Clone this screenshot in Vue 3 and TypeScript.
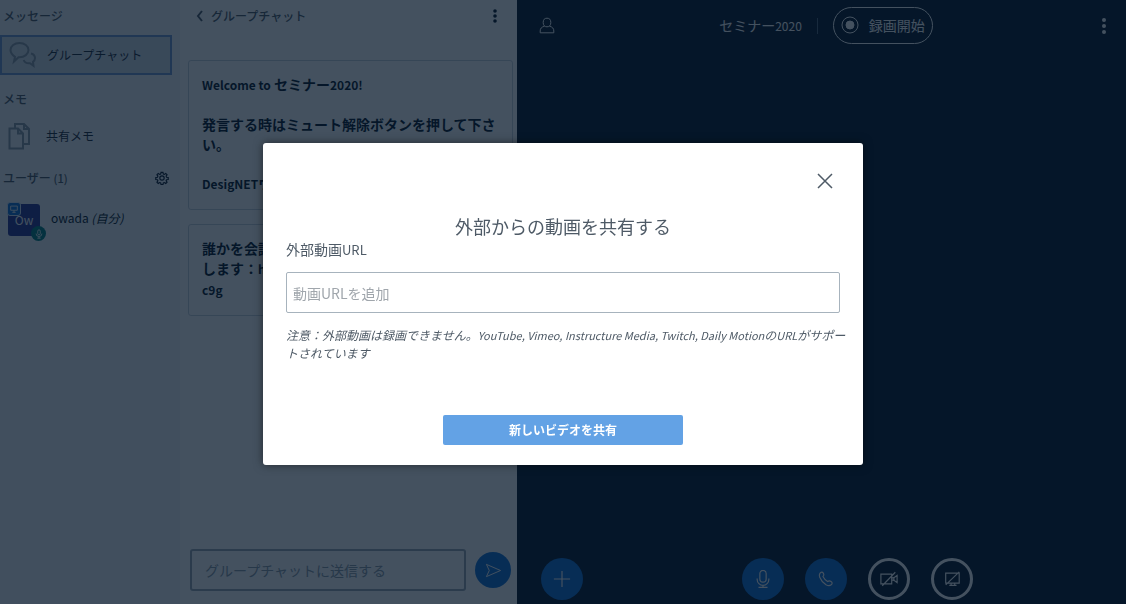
<script setup lang="ts">
import { ref } from 'vue'

const videoUrl = ref('')
const message = ref('')
const open = ref(true)
</script>

<template>
  <div class="app">
    <nav class="sidebar">
      <h2>メッセージ</h2>
      <button class="item active" type="button">
        <svg class="icon-lg" viewBox="0 0 28 28" aria-hidden="true">
          <path d="M5 20.500 6 15.800C3 13.800 1.500 11.400 1.500 9 1.500 5 5.500 2 10.500 2s9 3 9 7-4 7.200-9 7.200h-1z" />
          <path d="M22 12.500c2.700.8 4 2.600 4 4.600 0 1.600-.8 2.900-2 3.800l.5 4-3.500-2.600c-3.500.3-5.500-1-6.300-3.300" />
        </svg>
        <span>グループチャット</span>
      </button>
      <h2>メモ</h2>
      <button class="item" type="button">
        <svg class="icon-lg" viewBox="0 0 28 28" aria-hidden="true">
          <path d="M1.500 6.500h8.500l5 5V26.500H1.500zM10 6.500v5h5" />
          <path d="M7 6.500V2h9l5 5v15h-6M16 2v5h5" />
        </svg>
        <span>共有メモ</span>
      </button>
      <div class="users-head">
        <h2>ユーザー <span class="latin">(1)</span></h2>
        <button class="plain" type="button" aria-label="ユーザー管理">
          <svg class="gear" viewBox="0 0 16 16">
            <circle cx="8" cy="8" r="2.500" />
            <path d="M6.900 1.500h2.200l.4 1.900 1.200.5 1.600-1.100 1.500 1.500-1.100 1.600.5 1.200 1.900.4v2.200l-1.900.3-.5 1.200 1.100 1.600-1.500 1.500-1.600-1.100-1.200.5-.4 1.900H6.900l-.4-1.900-1.200-.5-1.600 1.100-1.500-1.500 1.100-1.600-.5-1.200-1.900-.3V7.500l1.900-.4.5-1.200-1.100-1.600 1.500-1.500 1.600 1.100 1.200-.5z" />
          </svg>
        </button>
      </div>
      <div class="user">
        <div class="avatar">
          <span>Ow</span>
          <span class="badge presenter">
            <svg viewBox="0 0 12 12"><path d="M2 2.500h8v5H2zM4 10h4M6 7.500V10" /></svg>
          </span>
          <span class="badge voice">
            <svg viewBox="0 0 12 12"><path d="M4.500 2.500a1.500 1.500 0 0 1 3 0v3a1.500 1.500 0 0 1-3 0zM2.500 5.500a3.500 3.500 0 0 0 7 0M6 9v2M4 11h4" /></svg>
          </span>
        </div>
        <span class="name">owada <em>(自分)</em></span>
      </div>
    </nav>

    <section class="chat">
      <header class="chat-head">
        <button class="plain back" type="button">
          <svg viewBox="0 0 8 12"><path d="M6 1 2 6l4 5" /></svg>
          <span>グループチャット</span>
        </button>
        <button class="plain" type="button" aria-label="オプション">
          <svg class="kebab" viewBox="0 0 6 16"><circle cx="3" cy="3" r="1.800" /><circle cx="3" cy="8" r="1.800" /><circle cx="3" cy="13" r="1.800" /></svg>
        </button>
      </header>
      <div class="messages">
        <article class="message">
          <p><span class="latin">Welcome to</span> セミナー<span class="latin">2020!</span></p>
          <p>発言する時はミュート解除ボタンを押して下さい。</p>
          <p><span class="latin">DesigNET</span>ウェブ会議</p>
        </article>
        <article class="message">
          <p>誰かを会議に招待する場合はこのリンクを送信<br />します：<span class="latin">https://meeting/owa-<br />c9g</span></p>
        </article>
      </div>
      <form class="composer" @submit.prevent>
        <input v-model="message" type="text" aria-label="メッセージ" placeholder="グループチャットに送信する" />
        <button class="send" type="submit" aria-label="送信">
          <svg viewBox="0 0 18 18"><path d="M1.500 2.500 16.500 9l-15 6.500L4.500 9z" /></svg>
        </button>
      </form>
    </section>

    <main class="media">
      <header class="nav">
        <button class="plain" type="button" aria-label="ユーザーリスト">
          <svg class="person" viewBox="0 0 16 18"><ellipse cx="8" cy="5.500" rx="3.800" ry="4.300" /><path d="M5.500 9.200C2.500 10 1.200 11.500 1.200 14v1.800h13.600V14c0-2.500-1.300-4-4.300-4.800" /></svg>
        </button>
        <div class="session">
          <h1>セミナー<span class="latin">2020</span></h1>
          <span class="divider"></span>
          <button class="record" type="button">
            <svg viewBox="0 0 18 18"><circle cx="9" cy="9" r="8" /><circle class="dot" cx="9" cy="9" r="4" /></svg>
            <span>録画開始</span>
          </button>
        </div>
        <button class="plain" type="button" aria-label="メニュー">
          <svg class="kebab" viewBox="0 0 6 16"><circle cx="3" cy="2" r="2" /><circle cx="3" cy="8" r="2" /><circle cx="3" cy="14" r="2" /></svg>
        </button>
      </header>
      <footer class="actions">
        <button class="round" type="button" aria-label="アクション">
          <svg viewBox="0 0 20 20"><path d="M10 1v18M1 10h18" /></svg>
        </button>
        <div class="controls">
          <button class="round" type="button" aria-label="ミュート">
            <svg viewBox="0 0 20 20"><path d="M6.500 4a3.500 3.500 0 0 1 7 0v6a3.500 3.500 0 0 1-7 0zM3.500 9.500v1a6.500 6.500 0 0 0 13 0v-1M10 17v2M5 19.300h10" /></svg>
          </button>
          <button class="round" type="button" aria-label="音声を終了">
            <svg viewBox="0 0 20 20"><path d="M3.200 3.800C4.500 2 6 2 7.200 3.700c1 1.600.6 2.500-.6 3.600 1.300 2.600 3 4.200 5.200 5.600 1.200-1.200 2.200-1.300 3.800-.2 1.700 1.200 1.600 2.700-.2 4-1.500 1.100-3.300.8-5.400-.4C6.300 13.900 4.300 11.300 3 8c-.6-1.600-.6-3 .2-4.200z" /></svg>
          </button>
          <button class="round ghost" type="button" aria-label="ウェブカメラ">
            <svg viewBox="0 0 20 20"><path d="M1 4.500h12v11H1zM13 9l2.500-.5L19 6v8l-3.500-2.500L13 11M15.500 8.500v3M2.500 17.500 17 2.500" /></svg>
          </button>
          <button class="round ghost" type="button" aria-label="画面共有">
            <svg viewBox="0 0 20 20"><path d="M3 3.500h15v11H3zM7 17h8M9 14.500V17M13 14.500V17M3 16.500 18 2" /></svg>
          </button>
        </div>
      </footer>
    </main>

    <div v-if="open" class="overlay">
      <form class="dialog" role="dialog" aria-modal="true" aria-labelledby="dialog-title" @submit.prevent>
        <button class="close" type="button" aria-label="閉じる" @click="open = false">
          <svg viewBox="0 0 16 16"><path d="m1 1 14 14M15 1 1 15" /></svg>
        </button>
        <h3 id="dialog-title">外部からの動画を共有する</h3>
        <label for="video-url">外部動画<span class="latin">URL</span></label>
        <input id="video-url" v-model="videoUrl" type="text" placeholder="動画URLを追加" />
        <p class="note">注意：外部動画は録画できません。<span class="latin">YouTube, Vimeo, Instructure Media, Twitch, Daily Motion</span>の<span class="latin">URL</span>がサポートされています</p>
        <button class="share" type="submit">新しいビデオを共有</button>
      </form>
    </div>
  </div>
</template>

<style>
body {
  margin: 0;
}
</style>

<style scoped>
.app {
  display: flex;
  min-height: 100vh;
  color: #4e5a66;
  background: #06172a;
  font: 12px/20px "Noto Sans CJK JP", sans-serif;
}
button,
input {
  box-sizing: border-box;
  margin: 0;
  font: inherit;
  color: inherit;
}
button {
  padding: 0;
  border: 0;
  background: none;
}
h1,
h2,
h3,
p {
  margin: 0;
  font-weight: 400;
}
svg {
  display: block;
  fill: none;
  stroke: currentColor;
}
h2 {
  padding-left: 3px;
  font-size: 12px;
  font-weight: 500;
}
.latin {
  font-size: 11px;
}
.plain {
  display: flex;
  align-items: center;
}

.sidebar {
  flex: 0 0 180px;
  box-sizing: border-box;
  padding: 6px 8px 0 0;
  background: #f3f6f9;
}
.item {
  display: flex;
  align-items: center;
  gap: 10px;
  width: 100%;
  height: 40px;
  padding-left: 8px;
  color: #1b2a3a;
}
.item .icon-lg {
  color: #8b9aa8;
}
.item.active {
  margin: 9px 0 14px;
  padding-left: 7px;
  border: 2px solid #7098d4;
  background: #d4dde6;
}
.icon-lg {
  width: 28px;
  height: 28px;
  stroke-width: 2;
}
.sidebar h2 + .item:not(.active) {
  margin: 7px 0 12px;
}
.users-head {
  display: flex;
  justify-content: space-between;
  align-items: center;
  padding-right: 3px;
}
.gear {
  width: 14px;
  height: 14px;
  color: #06172a;
  stroke-width: 1.3;
}
.user {
  display: flex;
  align-items: center;
  gap: 11px;
  margin-top: 16px;
  padding-left: 8px;
}
.avatar {
  position: relative;
  display: grid;
  place-items: center;
  width: 32px;
  height: 32px;
  border-radius: 3px;
  color: #fff;
  background: #283593;
}
.badge {
  position: absolute;
  display: grid;
  place-items: center;
  width: 12px;
  height: 12px;
}
.badge svg {
  width: 10px;
  height: 10px;
}
.presenter {
  left: -1px;
  top: -2px;
  border: 1px solid #d5e6fa;
  border-radius: 3px;
  background: #0f70d7;
}
.voice {
  right: -6px;
  bottom: -5px;
  width: 15px;
  height: 15px;
  border-radius: 50%;
  background: #008081;
}
.name {
  padding-bottom: 4px;
  color: #06172a;
}

.chat {
  display: flex;
  flex: 0 0 337px;
  flex-direction: column;
  box-sizing: border-box;
  background: #fff;
}
.chat-head {
  display: flex;
  justify-content: space-between;
  align-items: center;
  padding: 6px 19px 0 16px;
  font-weight: 500;
}
.back {
  gap: 7px;
}
.back svg {
  width: 8px;
  height: 12px;
  stroke-width: 2;
}
.kebab {
  width: 6px;
  height: 16px;
  fill: currentColor;
  stroke: none;
}
.chat-head .kebab {
  color: #06172a;
}
.messages {
  display: flex;
  flex: 1;
  flex-direction: column;
  gap: 14px;
  padding: 34px 4px 0 8px;
}
.message {
  display: flex;
  flex-direction: column;
  gap: 19px;
  padding: 13px 13px 15px;
  border: 1px solid #c8d2dc;
  border-radius: 3px;
  color: #06172a;
  font-size: 14px;
}
.message p {
  font-weight: 700;
}
.message .latin {
  font-size: 12px;
}
.composer {
  display: flex;
  align-items: center;
  gap: 9px;
  padding: 0 6px 13px 10px;
}
.composer input {
  flex: 1;
  min-width: 0;
  height: 42px;
  padding: 0 13px;
  border: 2px solid #9aa7b4;
  border-radius: 3px;
  background: none;
  font-size: 14px;
}
.composer input::placeholder {
  color: #8b9aa8;
}
.send {
  display: grid;
  place-items: center;
  width: 36px;
  height: 36px;
  border-radius: 50%;
  color: #fff;
  background: #0f70d7;
}
.send svg {
  width: 17px;
  height: 17px;
}

.media {
  display: flex;
  flex: 1;
  flex-direction: column;
  justify-content: space-between;
  min-width: 0;
  color: #fff;
}
.nav {
  display: flex;
  justify-content: space-between;
  align-items: center;
  padding: 7px 19px 0 22px;
}
.person {
  width: 16px;
  height: 18px;
}
.session {
  display: flex;
  align-items: center;
  gap: 15px;
  margin-right: 4px;
}
h1,
.record {
  font-size: 14px;
}
.session .latin {
  font-size: 12px;
}
.divider {
  width: 1px;
  height: 16px;
  background: #51657a;
}
.record {
  display: flex;
  align-items: center;
  gap: 10px;
  height: 37px;
  padding: 0 7px 2px;
  border: 1px solid #fff;
  border-radius: 19px;
}
.record svg {
  width: 18px;
  height: 18px;
}
.record .dot {
  fill: currentColor;
}
.actions {
  display: flex;
  gap: 30px;
  padding: 0 24px 4px;
}
.controls {
  display: flex;
  flex: 1;
  justify-content: center;
  gap: 21px;
}
.round {
  display: grid;
  place-items: center;
  width: 42px;
  height: 42px;
  border-radius: 50%;
  background: #0f70d7;
}
.round svg {
  width: 18px;
  height: 18px;
  stroke-width: 1.3;
}
.ghost {
  border: 3px solid #fff;
  background: none;
}

.overlay {
  position: fixed;
  inset: 0;
  display: flex;
  align-items: center;
  justify-content: center;
  padding-top: 4px;
  background: rgba(6, 23, 42, 0.75);
}
.dialog {
  display: flex;
  flex-direction: column;
  box-sizing: border-box;
  width: 600px;
  max-width: 90vw;
  padding: 23px 23px 20px;
  border-radius: 3px;
  background: #fff;
  box-shadow: 0 0 10px rgba(0, 0, 0, 0.5);
}
.close {
  display: grid;
  place-items: center;
  align-self: flex-end;
  width: 30px;
  height: 30px;
}
.close svg {
  width: 16px;
  height: 16px;
  stroke-width: 1.5;
}
.dialog h3 {
  margin-top: 18px;
  font-size: 18px;
  line-height: 24px;
  text-align: center;
}
.dialog label {
  margin-bottom: 11px;
  font-size: 14px;
  line-height: 22px;
}
.dialog label .latin {
  font-size: 13px;
}
.dialog input {
  height: 41px;
  padding: 0 6px;
  border: 1px solid #a7b3bd;
  border-radius: 2px;
  font-size: 14px;
}
.dialog input::placeholder {
  color: #a0a6ac;
}
.note {
  margin: 13px -10px 53px 0;
  line-height: 18px;
  font-style: italic;
}
.share {
  align-self: center;
  width: 240px;
  height: 30px;
  border-radius: 2px;
  color: #fff;
  background: #63a2e5;
  font-weight: 700;
}
</style>
